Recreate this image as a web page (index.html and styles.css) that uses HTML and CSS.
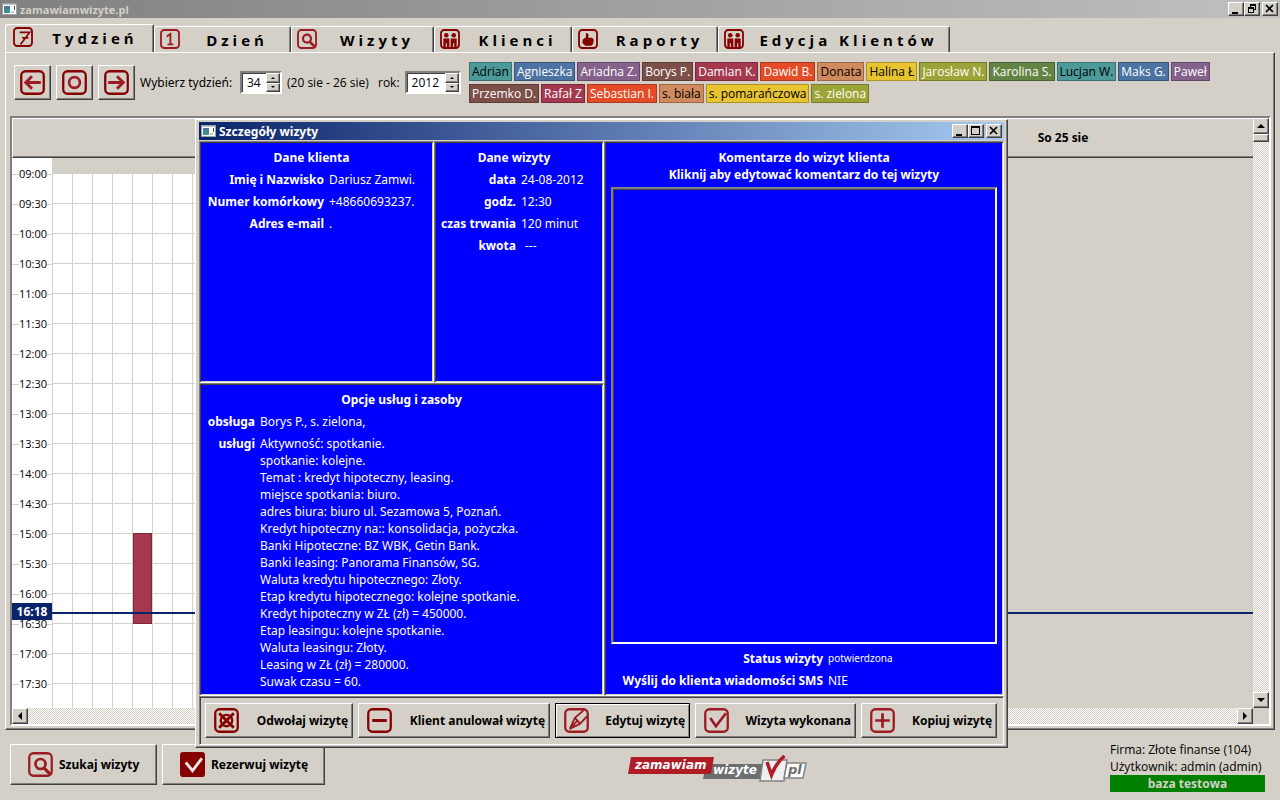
FILE: index.html
```html
<!DOCTYPE html>
<html lang="pl">
<head>
<meta charset="utf-8">
<title>zamawiamwizyte.pl</title>
<link rel="stylesheet" href="styles.css">
</head>
<body>
<svg class="sprite" aria-hidden="true">
  <defs>
    <symbol id="box" viewBox="0 0 24 24"><rect x="1.2" y="1.2" width="21.6" height="21.6" rx="4" fill="none" stroke="currentColor" stroke-width="2.2"/></symbol>
    <symbol id="i-seven" viewBox="0 0 24 24"><use href="#box"/><path d="M8 6.500h12L9 21M11 13h7.500" fill="none" stroke="currentColor" stroke-width="2"/></symbol>
    <symbol id="i-one" viewBox="0 0 24 24"><use href="#box"/><path d="M8 9l4.5-3v12M9 18.5h7" fill="none" stroke="currentColor" stroke-width="2.2"/></symbol>
    <symbol id="i-search" viewBox="0 0 24 24"><use href="#box"/><circle cx="12" cy="11.5" r="4.8" fill="none" stroke="currentColor" stroke-width="2.6"/><path d="M15 15l6 6" stroke="currentColor" stroke-width="3"/></symbol>
    <symbol id="i-people" viewBox="0 0 24 24"><use href="#box"/><circle cx="7.5" cy="7.5" r="2.7" fill="currentColor"/><circle cx="16.5" cy="7.5" r="2.7" fill="currentColor"/><path d="M4 11.500h7.200V23H8.300v-6H6.900v6H4zM12.800 11.500H20V23h-2.900v-6h-1.400v6h-2.900z" fill="currentColor"/></symbol>
    <symbol id="i-hand" viewBox="0 0 24 24"><use href="#box"/><path d="M9.500 4.500l3 1.500v4.500h4.500l2 2.500-1 5-2 2H9l-3.500-3v-4l4-3z" fill="currentColor"/></symbol>
    <symbol id="i-left" viewBox="0 0 24 24"><use href="#box"/><path d="M20 12H6M11.500 6L5.500 12l6 6" fill="none" stroke="#9b1c22" stroke-width="2.800"/></symbol>
    <symbol id="i-right" viewBox="0 0 24 24"><use href="#box"/><path d="M4 12h14M12.500 6l6 6-6 6" fill="none" stroke="#9b1c22" stroke-width="2.800"/></symbol>
    <symbol id="i-circle" viewBox="0 0 24 24"><use href="#box"/><circle cx="12" cy="12" r="5.200" fill="none" stroke="#9b1c22" stroke-width="2.600"/></symbol>
    <symbol id="i-cancel" viewBox="0 0 24 24"><use href="#box"/><circle cx="12" cy="12" r="5.500" fill="none" stroke="currentColor" stroke-width="2.200"/><path d="M5 5l14 14M19 5L5 19" stroke="currentColor" stroke-width="2.800"/></symbol>
    <symbol id="i-minus" viewBox="0 0 24 24"><use href="#box"/><path d="M5 12h14" stroke="currentColor" stroke-width="2.800"/></symbol>
    <symbol id="i-pen" viewBox="0 0 24 24"><use href="#box"/><path d="M5.500 20L10.500 9.500 19 2M5.500 20l10-5L22 8M10.500 9.500l5 5.500M5.500 20l8-8.500" fill="none" stroke="currentColor" stroke-width="1.800"/></symbol>
    <symbol id="i-check" viewBox="0 0 24 24"><use href="#box"/><path d="M6 9.500l5.500 8L21 5" fill="none" stroke="currentColor" stroke-width="2.600"/></symbol>
    <symbol id="i-plus" viewBox="0 0 24 24"><use href="#box"/><path d="M5 12h14M12 5v14" stroke="currentColor" stroke-width="2.600"/></symbol>
    <symbol id="i-checkfill" viewBox="0 0 24 24"><rect width="24" height="24" rx="3" fill="currentColor"/><path d="M5.500 10l6.500 8L21 6" fill="none" stroke="#ece9e4" stroke-width="2.800"/></symbol>
    <symbol id="i-app" viewBox="0 0 15 12"><rect x=".5" y=".5" width="14" height="11" fill="#fff" stroke="#a0a0a0"/><path d="M1 1h13v1H1z" fill="#b9c6d8"/><path d="M2 3h6v7H2z" fill="#3e8f8a"/><path d="M2 3h6v3H2z" fill="#4a7a9c"/><path d="M9 8h3v2H9z" fill="#c8c8c8"/><path d="M12 3h1v4h-1z" fill="#306070"/></symbol>
    <symbol id="w-min" viewBox="0 0 12 10"><path d="M2 8h6v2H2z"/></symbol>
    <symbol id="w-max" viewBox="0 0 12 10"><path d="M1 0h9v9H1zm1 2v6h7V2z" fill-rule="evenodd"/></symbol>
    <symbol id="w-restore" viewBox="0 0 12 10"><path d="M4 0h6v6H8V5h1V2H5v1H4zM2 3h6v6H2zm1 2v3h4V5z" fill-rule="evenodd"/></symbol>
    <symbol id="w-close" viewBox="0 0 12 10"><path d="M2 1l7 7M9 1L2 8" stroke="#000" stroke-width="1.700" fill="none"/></symbol>
    <symbol id="a-up" viewBox="0 0 8 8"><path d="M4 2l4 4H0z"/></symbol>
    <symbol id="a-down" viewBox="0 0 8 8"><path d="M0 2h8L4 6z"/></symbol>
    <symbol id="a-left" viewBox="0 0 8 8"><path d="M6 0v8L2 4z"/></symbol>
    <symbol id="a-right" viewBox="0 0 8 8"><path d="M2 0l4 4-4 4z"/></symbol>
  </defs>
</svg>

<div class="app">
  <header class="titlebar titlebar-app">
    <svg class="app-icon"><use href="#i-app"/></svg>
    <span class="titlebar-text">zamawiamwizyte.pl</span>
    <button class="win-btn" aria-label="Minimalizuj"><svg><use href="#w-min"/></svg></button>
    <button class="win-btn" aria-label="Przywróć"><svg><use href="#w-restore"/></svg></button>
    <button class="win-btn win-close" aria-label="Zamknij"><svg><use href="#w-close"/></svg></button>
  </header>

  <nav class="tabs">
    <button class="tab tab-week active"><svg class="dark"><use href="#i-seven"/></svg><span>Tydzień</span></button>
    <button class="tab tab-day"><svg><use href="#i-one"/></svg><span>Dzień</span></button>
    <button class="tab tab-visits"><svg><use href="#i-search"/></svg><span>Wizyty</span></button>
    <button class="tab tab-clients"><svg class="dark"><use href="#i-people"/></svg><span>Klienci</span></button>
    <button class="tab tab-reports"><svg class="dark"><use href="#i-hand"/></svg><span>Raporty</span></button>
    <button class="tab tab-edit"><svg class="dark"><use href="#i-people"/></svg><span>Edycja Klientów</span></button>
  </nav>

  <main class="page">
    <div class="toolbar">
      <div class="week-picker">
        <button class="nav-btn" aria-label="Poprzedni tydzień"><svg><use href="#i-left"/></svg></button>
        <button class="nav-btn" aria-label="Bieżący tydzień"><svg><use href="#i-circle"/></svg></button>
        <button class="nav-btn" aria-label="Następny tydzień"><svg><use href="#i-right"/></svg></button>
        <label class="week-label" for="week">Wybierz tydzień:</label>
        <div class="spinner spinner-week"><input id="week" type="text" value="34"><div class="spin-btns"><button aria-label="Tydzień w górę"><svg><use href="#a-up"/></svg></button><button aria-label="Tydzień w dół"><svg><use href="#a-down"/></svg></button></div></div>
        <span class="week-range">(20 sie - 26 sie)</span>
        <label for="year">rok:</label>
        <div class="spinner spinner-year"><input id="year" type="text" value="2012"><div class="spin-btns"><button aria-label="Rok w górę"><svg><use href="#a-up"/></svg></button><button aria-label="Rok w dół"><svg><use href="#a-down"/></svg></button></div></div>
      </div>
      <div class="tags">
        <button class="tag teal">Adrian</button><button class="tag blue">Agnieszka</button><button class="tag purple">Ariadna Z.</button><button class="tag brown">Borys P.</button><button class="tag crimson">Damian K.</button><button class="tag orange">Dawid B.</button><button class="tag tan">Donata</button><button class="tag yellow">Halina Ł</button><button class="tag olive">Jarosław N.</button><button class="tag green">Karolina S.</button><button class="tag teal">Lucjan W.</button><button class="tag blue">Maks G.</button><button class="tag purple">Paweł</button><button class="tag brown">Przemko D.</button><button class="tag crimson">Rafał Z</button><button class="tag orange">Sebastian I.</button><button class="tag tan">s. biała</button><button class="tag yellow">s. pomarańczowa</button><button class="tag olive">s. zielona</button>
      </div>
    </div>

    <section class="calendar">
      <div class="cal-main">
        <div class="cal-head"><div class="day-name">So 25 sie</div></div>
        <div class="cal-body">
          <div class="hours">
            <div>09:00</div><div>09:30</div><div>10:00</div><div>10:30</div><div>11:00</div><div>11:30</div><div>12:00</div><div>12:30</div><div>13:00</div><div>13:30</div><div>14:00</div><div>14:30</div><div>15:00</div><div>15:30</div><div>16:00</div><div>16:30</div><div>17:00</div><div>17:30</div>
          </div>
          <div class="slots"></div>
          <div class="closed"></div>
          <div class="event"></div>
          <div class="now-line"></div>
          <div class="now">16:18</div>
        </div>
      </div>
      <div class="scroll-v">
        <button class="scroll-btn" aria-label="Przewiń w górę"><svg><use href="#a-up"/></svg></button>
        <div class="thumb"></div>
        <div class="track"></div>
        <button class="scroll-btn" aria-label="Przewiń w dół"><svg><use href="#a-down"/></svg></button>
      </div>
      <div class="scroll-h">
        <button class="scroll-btn" aria-label="Przewiń w lewo"><svg><use href="#a-left"/></svg></button>
        <div class="track"></div>
        <button class="scroll-btn" aria-label="Przewiń w prawo"><svg><use href="#a-right"/></svg></button>
      </div>
    </section>
  </main>

  <footer class="footer">
    <div class="footer-actions">
      <button class="big-btn big-search"><svg><use href="#i-search"/></svg>Szukaj wizyty</button>
      <button class="big-btn big-book"><svg class="dark"><use href="#i-checkfill"/></svg>Rezerwuj wizytę</button>
    </div>
    <svg class="logo" viewBox="0 0 180 30" role="img" aria-label="zamawiamwizyte.pl">
      <path d="M78 9h58l-2 15H75z" fill="#6d6e70"/>
      <path d="M3 2h83l-3 17H0z" fill="#b01c26"/>
      <path d="M135 5h24l-3 21h-24z" fill="#efefef" stroke="#808285" stroke-width="1.500"/>
      <path d="M159 8h19l-3 15h-19z" fill="#fff" stroke="#808285" stroke-width="1.500"/>
      <path d="M139 7l4.500 13c3-8 7-14 13-19" fill="none" stroke="#b01c26" stroke-width="3.500"/>
      <text x="7" y="14" class="logo-a">zamawiam</text>
      <text x="85" y="19" class="logo-b">wizyte</text>
      <text x="160" y="19" class="logo-c">pl</text>
    </svg>
    <div class="company">
      <div>Firma: Złote finanse (104)</div>
      <div>Użytkownik: admin (admin)</div>
      <div class="db">baza testowa</div>
    </div>
  </footer>

  <div class="dialog" role="dialog" aria-label="Szczegóły wizyty">
    <div class="titlebar titlebar-dialog">
      <svg class="app-icon"><use href="#i-app"/></svg>
      <span class="titlebar-text">Szczegóły wizyty</span>
      <button class="win-btn" aria-label="Minimalizuj okno"><svg><use href="#w-min"/></svg></button>
      <button class="win-btn" aria-label="Maksymalizuj okno"><svg><use href="#w-max"/></svg></button>
      <button class="win-btn win-close" aria-label="Zamknij okno"><svg><use href="#w-close"/></svg></button>
    </div>
    <div class="panels">
      <section class="panel panel-client">
        <h2>Dane klienta</h2>
        <dl><dt>Imię i Nazwisko</dt><dd>Dariusz Zamwi.</dd><dt>Numer komórkowy</dt><dd>+48660693237.</dd><dt>Adres e-mail</dt><dd>.</dd></dl>
      </section>
      <section class="panel panel-visit">
        <h2>Dane wizyty</h2>
        <dl><dt>data</dt><dd>24-08-2012</dd><dt>godz.</dt><dd>12:30</dd><dt>czas trwania</dt><dd>120 minut</dd><dt>kwota</dt><dd class="amount">---</dd></dl>
      </section>
      <section class="panel panel-comments">
        <h2><label for="comment">Komentarze do wizyt klienta<br>Kliknij aby edytować komentarz do tej wizyty</label></h2>
        <textarea id="comment"></textarea>
        <dl><dt>Status wizyty</dt><dd class="small">potwierdzona</dd><dt>Wyślij do klienta wiadomości SMS</dt><dd>NIE</dd></dl>
      </section>
      <section class="panel panel-options">
        <h2>Opcje usług i zasoby</h2>
        <dl><dt>obsługa</dt><dd>Borys P., s. zielona,</dd><dt>usługi</dt><dd>Aktywność: spotkanie.<br>spotkanie: kolejne.<br>Temat : kredyt hipoteczny, leasing.<br>miejsce spotkania: biuro.<br>adres biura: biuro ul. Sezamowa 5, Poznań.<br>Kredyt hipoteczny na:: konsolidacja, pożyczka.<br>Banki Hipoteczne: BZ WBK, Getin Bank.<br>Banki leasing: Panorama Finansów, SG.<br>Waluta kredytu hipotecznego: Złoty.<br>Etap kredytu hipotecznego: kolejne spotkanie.<br>Kredyt hipoteczny w ZŁ (zł) = 450000.<br>Etap leasingu: kolejne spotkanie.<br>Waluta leasingu: Złoty.<br>Leasing w ZŁ (zł) = 280000.<br>Suwak czasu = 60.</dd></dl>
      </section>
    </div>
    <div class="dialog-actions">
      <button class="act act-cancel"><svg class="dark"><use href="#i-cancel"/></svg><span>Odwołaj wizytę</span></button>
      <button class="act act-client"><svg class="dark"><use href="#i-minus"/></svg><span>Klient anulował wizytę</span></button>
      <button class="act act-edit default"><svg><use href="#i-pen"/></svg><span>Edytuj wizytę</span></button>
      <button class="act act-done"><svg><use href="#i-check"/></svg><span>Wizyta wykonana</span></button>
      <button class="act act-copy"><svg><use href="#i-plus"/></svg><span>Kopiuj wizytę</span></button>
    </div>
  </div>
</div>
</body>
</html>
```
FILE: styles.css
```css
:root {
  --face: #d4d0c8;
  --dark: #404040;
  --mid: #808080;
  --navy: #0a246a;
  --red: #9b1c22;
  --maroon: #860000;
}
* { box-sizing: border-box; }
body {
  margin: 0;
  background: var(--face);
  color: #000;
  font: 12px/17px "Open Sans", "Noto Sans", sans-serif;
}
button, input, textarea { font: inherit; color: inherit; margin: 0; padding: 0; border-radius: 0; }
svg { display: block; flex: none; color: var(--red); }
svg.dark { color: var(--maroon); }
.sprite { position: absolute; width: 0; height: 0; }

.app { position: relative; display: flex; flex-direction: column; min-height: 100vh; }

/* Raised 3D edge shared by all push buttons */
.win-btn, .nav-btn, .spin-btns button, .scroll-btn, .thumb, .big-btn, .act {
  background: var(--face);
  border: 1px solid;
  border-color: #fff var(--dark) var(--dark) #fff;
  box-shadow: inset -1px -1px var(--mid);
}

.titlebar { display: flex; align-items: center; height: 18px; padding: 0 2px; }
.titlebar-app { background: linear-gradient(90deg, #808080, #c0c0c0); color: var(--face); }
.titlebar-dialog { background: linear-gradient(90deg, #0a246a, #a6caf0); color: #fff; }
.app-icon { width: 15px; height: 12px; }
.titlebar-text { flex: 1; padding-left: 3px; font-size: 11px; font-weight: 700; }
.win-btn { display: flex; align-items: center; justify-content: center; width: 16px; height: 14px; }
.win-btn svg { width: 12px; height: 10px; fill: #000; }
.win-close { margin-left: 2px; }

.tabs { display: flex; align-items: flex-end; height: 34px; padding: 0 5px; }
.tab {
  display: flex;
  align-items: flex-start;
  height: 26px;
  padding: 2px 0 0 5px;
  background: var(--face);
  border: solid;
  border-width: 1px 1px 0;
  border-color: #fff var(--dark) #fff #fff;
  border-radius: 3px 2px 0 0;
  box-shadow: inset -1px 0 var(--mid);
  font-size: 15px;
  font-weight: 700;
  line-height: 20px;
  letter-spacing: 4px;
}
.tab svg { width: 20px; height: 20px; }
.tab span { flex: 1; text-align: center; padding: 1px 0 0 4px; white-space: nowrap; }
.tab.active { height: 28px; padding-left: 7px; }
.tab-week { width: 149px; }
.tab-day { width: 137px; }
.tab-visits { width: 143px; }
.tab-clients { width: 138px; }
.tab-reports { width: 146px; }
.tab-edit { width: 232px; }

.page {
  flex: 1;
  display: flex;
  flex-direction: column;
  margin: 0 5px;
  padding: 9px 3px 3px 4px;
  border: 1px solid;
  border-color: #fff var(--dark) var(--dark) #fff;
  box-shadow: inset -1px -1px var(--mid);
}
.toolbar { display: flex; align-items: flex-start; height: 54px; }
.week-picker { display: flex; align-items: center; gap: 5px; width: 459px; padding: 3px 0 0 4px; flex: none; white-space: nowrap; }
.nav-btn { display: flex; align-items: center; justify-content: center; width: 37px; height: 35px; flex: none; }
.nav-btn svg { width: 25px; height: 25px; color: var(--maroon); }
.week-label { width: 95px; font-family: "Noto Sans", sans-serif; }
.week-range { width: 86px; overflow: hidden; }
.spinner {
  display: flex;
  height: 23px;
  background: #fff;
  border: 2px solid;
  border-color: var(--mid) #fff #fff var(--mid);
  box-shadow: inset 1px 1px var(--dark);
  flex: none;
}
.spinner-week { width: 42px; }
.spinner-year { width: 56px; }
.spinner input { flex: 1; min-width: 0; padding-left: 5px; border: 0; background: none; outline: 0; }
.spin-btns { display: flex; flex-direction: column; width: 14px; }
.spin-btns button { flex: 1; display: flex; align-items: center; justify-content: center; }
.spin-btns svg { width: 4px; height: 4px; }

.tags { display: flex; flex-wrap: wrap; gap: 3px 2px; max-width: 760px; }
.tag { height: 19px; padding: 0 2px; border: 1px solid rgba(0, 0, 0, .25); background-clip: border-box; color: #fff; line-height: 17px; white-space: nowrap; }
.teal { background-color: #4c9a9a; color: #000; }
.blue { background-color: #4c73a3; }
.purple { background-color: #84628c; }
.brown { background-color: #7c4f48; }
.crimson { background-color: #a4384f; }
.orange { background-color: #e44c28; }
.tan { background-color: #cf8a5e; color: #000; }
.yellow { background-color: #e8c430; color: #000; }
.olive { background-color: #9ca438; }
.green { background-color: #648444; }

.calendar {
  flex: 1;
  display: grid;
  grid-template: 1fr 16px / 1fr 16px;
  border: 2px solid;
  border-color: var(--mid) #fff #fff var(--mid);
  box-shadow: inset 1px 1px var(--dark);
}
.cal-main { display: flex; flex-direction: column; min-width: 0; }
.cal-head {
  display: flex;
  justify-content: flex-end;
  height: 40px;
  border: solid;
  border-width: 1px 0 1px 1px;
  border-color: #fff #fff var(--dark);
  box-shadow: inset 0 -1px var(--mid);
}
.day-name { width: 380px; text-align: center; line-height: 38px; font-weight: 700; }
.cal-body { position: relative; flex: 1; display: flex; }
.hours {
  width: 40px;
  padding-top: 1px;
  background: #fff;
  font-size: 11px;
  line-height: 12px;
}
.hours div { display: flex; align-items: center; height: 30px; }
.hours div::before, .hours div::after { content: ""; flex: 1; height: 1px; background: var(--face); }
.hours div::after { flex: 0 0 5px; }
.slots {
  flex: 1;
  margin-top: 15px;
  background:
    repeating-linear-gradient(90deg, var(--face) 0 1px, transparent 1px 20px),
    repeating-linear-gradient(180deg, var(--face) 0 1px, transparent 1px 30px),
    #fff;
}
.closed { width: 380px; }
.event { position: absolute; left: 121px; top: 375px; width: 19px; height: 91px; background: #a4384f; border: 1px solid #7c2a3c; }
.now-line { position: absolute; left: 40px; right: 0; top: 454px; height: 2px; background: var(--navy); }
.now { position: absolute; left: 0; top: 445px; width: 40px; background: var(--navy); color: #fff; text-align: center; font-weight: 700; line-height: 17px; }

.scroll-v, .scroll-h { display: flex; }
.scroll-v { flex-direction: column; }
.scroll-btn { display: flex; align-items: center; justify-content: center; width: 16px; height: 16px; flex: none; }
.scroll-btn svg { width: 8px; height: 8px; fill: #000; }
.thumb { height: 8px; }
.track { flex: 1; background: repeating-conic-gradient(#fff 0 25%, var(--face) 0 50%) 0 0 / 2px 2px; }

.footer { display: flex; justify-content: space-between; height: 70px; padding: 11px 15px 0 10px; }
.footer-actions { display: flex; gap: 5px; padding-top: 3px; }
.big-btn { display: flex; align-items: center; gap: 6px; height: 41px; padding-left: 17px; font-family: "Noto Sans", sans-serif; font-weight: 700; white-space: nowrap; }
.big-btn svg { width: 25px; height: 25px; }
.big-search { width: 147px; }
.big-book { width: 163px; }
.logo { width: 180px; height: 30px; margin-top: 14px; }
.logo text { font-family: "DejaVu Sans", sans-serif; font-style: italic; font-weight: 700; fill: #fff; }
.logo .logo-a { font-size: 12px; }
.logo .logo-b { font-size: 12px; }
.logo .logo-c { font-size: 13px; fill: #6d6e70; }
.company { width: 155px; white-space: nowrap; }
.db { background: #008000; color: var(--face); font-weight: 700; text-align: center; }

.dialog {
  position: absolute;
  left: 195px;
  top: 119px;
  width: 813px;
  padding: 2px 3px;
  background: var(--face);
  border: 1px solid;
  border-color: #fff var(--dark) var(--dark) #fff;
  box-shadow: inset -1px -1px var(--mid);
  font-family: "Noto Sans", "Open Sans", sans-serif;
}
.titlebar-dialog { margin-bottom: 1px; }
.titlebar-dialog .titlebar-text { font-size: 12px; }
.panels {
  display: grid;
  grid-template: 242px 313px / 235px 170px 1fr;
  grid-template-areas: "client visit comments" "options options comments";
  color: #fff;
}
.panel {
  display: flex;
  flex-direction: column;
  padding: 7px 6px 6px;
  background: #00f;
  border: 1px solid;
  border-color: var(--mid) #fff #fff var(--mid);
  box-shadow: inset 1px 1px var(--dark), inset -1px -1px var(--face);
}
.panel-client { grid-area: client; }
.panel-visit { grid-area: visit; }
.panel-comments { grid-area: comments; }
.panel-options { grid-area: options; }
.panel h2 { margin: 0 0 5px; font-size: 12px; font-weight: 700; text-align: center; }
.panel-client h2, .panel-visit h2 { padding-right: 10px; }
.panel dl { display: grid; grid-template-columns: max-content 1fr; gap: 5px; margin: 0; white-space: nowrap; }
.panel dt { font-weight: 700; text-align: right; }
.panel dd { margin: 0; }
.panel .amount { padding-left: 4px; }
.panel .small { font-size: 10px; }
.panel-client dl { grid-template-columns: 118px 1fr; }
.panel-visit dl { grid-template-columns: 75px 1fr; }
.panel-options dl { grid-template-columns: 49px 1fr; }
.panel-comments dl { grid-template-columns: 212px 1fr; }
.panel-comments h2 { margin-bottom: 4px; }
.panel-comments textarea {
  flex: 1;
  margin-bottom: 6px;
  background: #00f;
  border: 2px solid;
  border-color: var(--mid) #fff #fff var(--mid);
  box-shadow: inset 1px 1px var(--dark);
  outline: 0;
  resize: none;
}

.dialog-actions {
  display: flex;
  gap: 5px;
  padding: 6px 5px;
  border: 1px solid;
  border-color: var(--mid) #fff #fff var(--mid);
  box-shadow: inset 1px 1px var(--dark);
}
.act { display: flex; align-items: center; height: 35px; padding: 0 4px 0 8px; font-weight: 700; white-space: nowrap; }
.act svg { width: 25px; height: 25px; }
.act span { flex: 1; text-align: right; }
.act.default { outline: 1px solid #000; outline-offset: -1px; border-color: #000; box-shadow: inset 1px 1px #fff, inset -1px -1px var(--mid); }
.act-cancel { width: 148px; }
.act-client { width: 192px; }
.act-edit { width: 135px; }
.act-done { width: 161px; }
.act-copy { width: 136px; }
```
